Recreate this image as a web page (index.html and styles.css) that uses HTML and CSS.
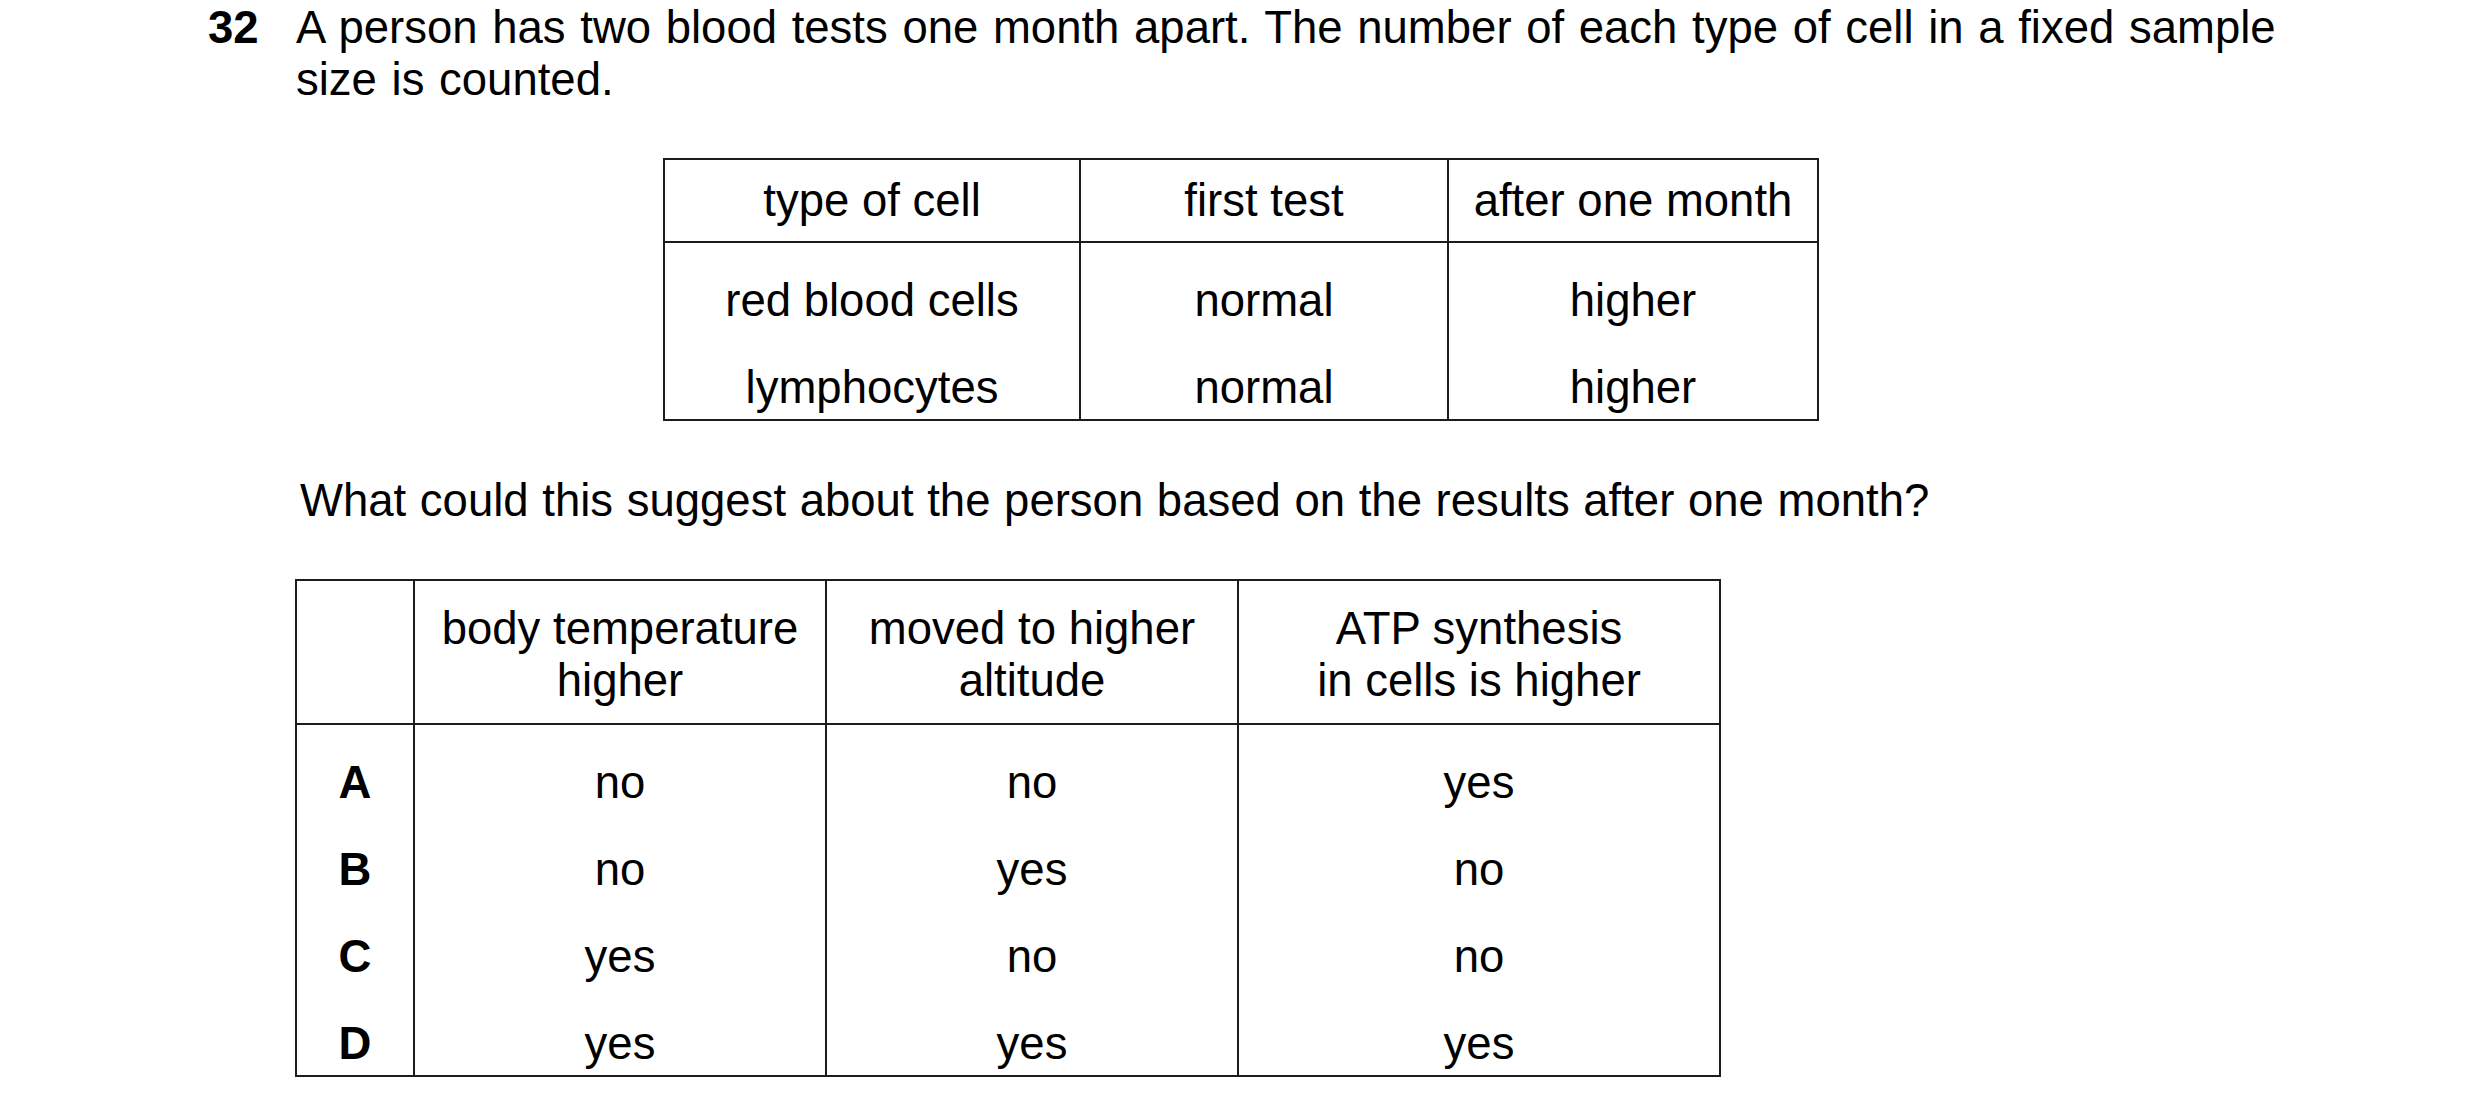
FILE: index.html
```html
<!DOCTYPE html>
<html lang="en">
<head>
<meta charset="utf-8">
<title>Question 32</title>
<link rel="stylesheet" href="styles.css">
</head>
<body>
<main class="page">
  <section class="question">
    <div class="qnum">32</div>
    <div class="qbody">
      <p class="stem">A person has two blood tests one month apart. The number of each type of cell in a fixed sample<br>size is counted.</p>
    </div>
  </section>

  <div class="table1-wrap">
    <table class="grid table1">
      <colgroup>
        <col class="t1c1"><col class="t1c2"><col class="t1c3">
      </colgroup>
      <thead>
        <tr><th>type of cell</th><th>first test</th><th>after one month</th></tr>
      </thead>
      <tbody>
        <tr><td>red blood cells</td><td>normal</td><td>higher</td></tr>
        <tr><td>lymphocytes</td><td>normal</td><td>higher</td></tr>
      </tbody>
    </table>
  </div>

  <p class="prompt">What could this suggest about the person based on the results after one month?</p>

  <div class="table2-wrap">
    <table class="grid table2">
      <colgroup>
        <col class="t2c1"><col class="t2c2"><col class="t2c3"><col class="t2c4">
      </colgroup>
      <thead>
        <tr><th></th><th>body temperature<br>higher</th><th>moved to higher<br>altitude</th><th>ATP synthesis<br>in cells is higher</th></tr>
      </thead>
      <tbody>
        <tr><td class="opt">A</td><td>no</td><td>no</td><td>yes</td></tr>
        <tr><td class="opt">B</td><td>no</td><td>yes</td><td>no</td></tr>
        <tr><td class="opt">C</td><td>yes</td><td>no</td><td>no</td></tr>
        <tr><td class="opt">D</td><td>yes</td><td>yes</td><td>yes</td></tr>
      </tbody>
    </table>
  </div>
</main>
</body>
</html>
```

FILE: styles.css
```css
html, body {
  margin: 0;
  padding: 0;
  background: #ffffff;
}

body {
  font-family: "Liberation Sans", Arial, sans-serif;
  font-size: 45.5px;
  line-height: 52px;
  color: #000000;
}

.page {
  padding-top: 2px;
  width: 2480px;
}

.question {
  display: flex;
  padding-left: 208px;
}

.qnum {
  width: 88px;
  flex: none;
  font-weight: bold;
}

.qbody {
  width: 2150px;
}

.stem {
  margin: 0;
  white-space: nowrap;
  word-spacing: 2px;
}

.table1-wrap {
  padding-left: 663px;
  margin-top: 52px;
}

.grid {
  border-collapse: collapse;
  table-layout: fixed;
}

.grid th,
.grid td {
  border: 2px solid #1c1c1c;
  text-align: center;
  font-weight: normal;
  line-height: 48px;
  padding: 0;
}

.grid tbody td {
  border-top: none;
  border-bottom: none;
  padding-top: 20px;
  padding-bottom: 19px;
}

.grid tbody tr:first-child td {
  padding-top: 34px;
  border-top: 2px solid #1c1c1c;
}

.grid tbody tr:last-child td {
  padding-bottom: 7px;
  border-bottom: 2px solid #1c1c1c;
}

.table1 {
  width: 1154px;
}

.table1 th {
  padding-top: 17px;
  padding-bottom: 16px;
}

.t1c1 { width: 416px; }
.t1c2 { width: 368px; }
.t1c3 { width: 370px; }

.prompt {
  margin: 54px 0 0 0;
  padding-left: 300px;
  word-spacing: 1px;
}

.table2-wrap {
  padding-left: 295px;
  margin-top: 52px;
}

.table2 {
  width: 1424px;
}

.table2 th {
  line-height: 52px;
  padding-top: 22px;
  padding-bottom: 16px;
}

.t2c1 { width: 118px; }
.t2c2 { width: 412px; }
.t2c3 { width: 412px; }
.t2c4 { width: 482px; }

.grid td.opt {
  font-weight: bold;
}
```
